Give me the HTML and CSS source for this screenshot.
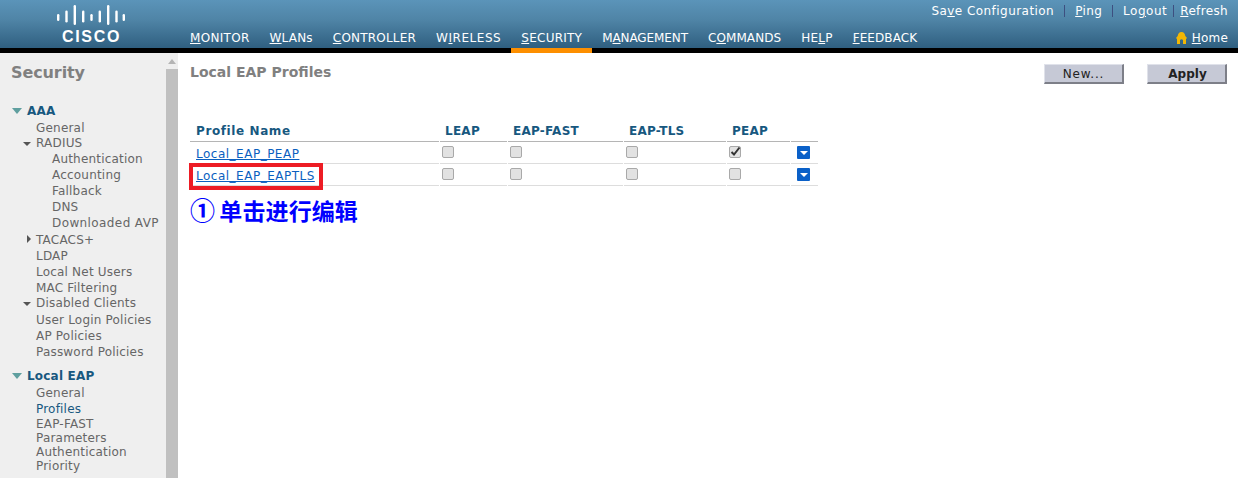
FILE: index.html
```html
<!DOCTYPE html>
<html>
<head>
<meta http-equiv="Content-Type" content="text/html; charset=utf-8"/>
<title>Local EAP Profiles</title>
<link rel="stylesheet" href="styles.css">
</head>
<body>

<div class="topbar">
  <div class="logo">
    <svg class="logo-bars" width="68" height="21" viewBox="0 0 68 21">
      <g fill="#fff">
        <rect x="0" y="9" width="2.4" height="7" rx="1.2"/>
        <rect x="8.300" y="5.500" width="2.4" height="12" rx="1.2"/>
        <rect x="16.600" y="0" width="2.4" height="20" rx="1.2"/>
        <rect x="25" y="5.500" width="2.4" height="12" rx="1.2"/>
        <rect x="33.300" y="9" width="2.4" height="7" rx="1.2"/>
        <rect x="41.600" y="5.500" width="2.4" height="12" rx="1.2"/>
        <rect x="50" y="0" width="2.4" height="20" rx="1.2"/>
        <rect x="58.300" y="5.500" width="2.4" height="12" rx="1.2"/>
        <rect x="65.600" y="9" width="2.4" height="7" rx="1.2"/>
      </g>
    </svg>
    <div class="logo-word">CISCO</div>
  </div>
  <div class="nav">
    <a><u>M</u>ONITOR</a>
    <a><u>W</u>LANs</a>
    <a><u>C</u>ONTROLLER</a>
    <a>W<u>I</u>RELESS</a>
    <a class="on"><u>S</u>ECURITY</a>
    <a>M<u>A</u>NAGEMENT</a>
    <a>C<u>O</u>MMANDS</a>
    <a>HE<u>L</u>P</a>
    <a><u>F</u>EEDBACK</a>
  </div>
  <div class="util">
    <div class="util-links">
      <a class="save">Sa<u>v</u>e Configuration</a><i></i>
      <a><u>P</u>ing</a><i></i>
      <a class="logout">Lo<u>g</u>out</a><i class="tight"></i>
      <a><u>R</u>efresh</a>
    </div>
    <div class="util-home">
      <svg width="11" height="12" viewBox="0 0 11 12"><path d="M5.5 0 C8 0 9 2 9.300 4 L11 6 L10 7 L10 12 L7 12 L7 8 Q5.500 6.500 4 8 L4 12 L1 12 L1 7 L0 6 L1.700 4 C2 2 3 0 5.500 0 Z" fill="#f2b705"/></svg>
      <a><u>H</u>ome</a>
    </div>
  </div>
</div>

<div class="page">
  <div class="side">
    <div class="side-menu">
      <h2>Security</h2>

      <div class="sec"><span class="tri-open"></span>AAA</div>
      <div class="row l1">General</div>
      <div class="row l1 short"><span class="sub-open"></span>RADIUS</div>
      <div class="row l2">Authentication</div>
      <div class="row l2">Accounting</div>
      <div class="row l2">Fallback</div>
      <div class="row l2">DNS</div>
      <div class="row l2 wide">Downloaded AVP</div>
      <div class="row l1 tall"><span class="sub-closed"></span>TACACS+</div>
      <div class="row l1">LDAP</div>
      <div class="row l1">Local Net Users</div>
      <div class="row l1">MAC Filtering</div>
      <div class="row l1 short"><span class="sub-open"></span>Disabled Clients</div>
      <div class="row l1 tall">User Login Policies</div>
      <div class="row l1">AP Policies</div>
      <div class="row l1">Password Policies</div>

      <div class="sec sec-2"><span class="tri-open"></span>Local EAP</div>
      <div class="row l1">General</div>
      <div class="row l1 cur">Profiles</div>
      <div class="row l1 wrap">EAP-FAST</div>
      <div class="row l1 wrap">Parameters</div>
      <div class="row l1 wrap">Authentication</div>
      <div class="row l1 wrap">Priority</div>
    </div>
    <div class="scroll">
      <div class="scroll-up"></div>
      <div class="scroll-thumb"></div>
    </div>
  </div>

  <div class="main">
    <div class="main-head">
      <h1>Local EAP Profiles</h1>
      <div class="btns">
        <button class="btn">New...</button>
        <button class="btn btn-b">Apply</button>
      </div>
    </div>

    <table class="grid">
      <colgroup>
        <col class="c1"><col class="c2"><col class="c3"><col class="c4"><col class="c5"><col class="c6">
      </colgroup>
      <tr>
        <th>Profile Name</th><th>LEAP</th><th>EAP-FAST</th><th>EAP-TLS</th><th>PEAP</th><th></th>
      </tr>
      <tr>
        <td><a href="#">Local_EAP_PEAP</a></td>
        <td><span class="chk"></span></td>
        <td><span class="chk"></span></td>
        <td><span class="chk"></span></td>
        <td><span class="chk"><svg width="11" height="11" viewBox="0 0 11 11"><path d="M1.500 6 L4 8.500 L9.500 1.500" fill="none" stroke="#333" stroke-width="2"/></svg></span></td>
        <td><span class="drop"></span></td>
      </tr>
      <tr>
        <td><a href="#">Local_EAP_EAPTLS</a><span class="mark"></span></td>
        <td><span class="chk"></span></td>
        <td><span class="chk"></span></td>
        <td><span class="chk"></span></td>
        <td><span class="chk"></span></td>
        <td><span class="drop"></span></td>
      </tr>
    </table>

    <div class="note"><span class="note-num">①</span> 单击进行编辑</div>
  </div>
</div>

</body>
</html>
```

FILE: styles.css
```css
html, body {
  margin: 0;
  padding: 0;
  height: 478px;
  overflow: hidden;
  background-color: white;
}

body, td, th, button {
  font-family: "DejaVu Sans", Verdana, sans-serif;
  font-size: 12px;
}

u {
  text-decoration: underline;
}

/* top bar */
.topbar {
  display: flex;
  height: 53px;
  background: linear-gradient(#5b94b9 0, #4f84a6 20px, #2f5f80 48px, #000 48px, #000 53px);
  color: white;
}

.logo {
  width: 180px;
  flex: none;
  display: flex;
  flex-direction: column;
  align-items: center;
  padding: 5px 0 0 1px;
  box-sizing: border-box;
}

.logo-bars {
  display: block;
}

.logo-word {
  margin-top: 2px;
  font-size: 16px;
  line-height: 17px;
  font-weight: bold;
  letter-spacing: 1.7px;
  padding-left: 2px;
  font-family: "Liberation Sans", sans-serif;
}

.nav {
  display: flex;
  align-items: flex-end;
}

.nav a {
  padding: 0 10px;
  height: 17px;
  line-height: 15px;
  border-bottom: 5px solid transparent;
  letter-spacing: 0.2px;
  white-space: nowrap;
}

.nav a:nth-child(1) { letter-spacing: 0.3px; }
.nav a:nth-child(4) { letter-spacing: 0.55px; }
.nav a:nth-child(5) { letter-spacing: 0.25px; }
.nav a:nth-child(6) { letter-spacing: -0.1px; }
.nav a:nth-child(7) { letter-spacing: 0.1px; }
.nav a:nth-child(9) { letter-spacing: 0.1px; }

.nav a.on {
  border-bottom-color: #fd8f00;
}

.util {
  margin-left: auto;
  padding: 2px 10px 0 0;
  display: flex;
  flex-direction: column;
  align-items: flex-end;
  letter-spacing: 0.2px;
  white-space: nowrap;
}

.util-links {
  display: flex;
  align-items: center;
  height: 17px;
}

.util-links a {
  letter-spacing: 0.35px;
}

.util-links .save {
  letter-spacing: 0.45px;
}

.util-links .logout {
  letter-spacing: 0.5px;
}

.util-links i {
  width: 1px;
  height: 12px;
  margin: 0 10px;
  background-color: #3d4f80;
}

.util-links i.tight {
  margin: 0 6px;
}

.util-home {
  margin-top: 11px;
  display: flex;
  align-items: center;
  gap: 5px;
  height: 16px;
}

/* layout */
.page {
  display: flex;
  height: 425px;
}

.side {
  width: 178px;
  flex: none;
  display: flex;
  background-color: #efefef;
  overflow: hidden;
}

.side-menu {
  width: 166px;
  flex: none;
  white-space: nowrap;
  color: #666;
}

.side-menu h2 {
  margin: 0;
  padding: 11px 0 0 11px;
  height: 38px;
  font-size: 16px;
  line-height: 18px;
  font-weight: bold;
  letter-spacing: -0.1px;
  color: #808080;
}

.scroll {
  width: 12px;
  flex: none;
}

.scroll-up {
  width: 0;
  margin: 6px 0 0 2px;
  border-left: 4px solid transparent;
  border-right: 4px solid transparent;
  border-bottom: 5px solid #b5b5b5;
}

.scroll-thumb {
  margin-top: 5px;
  height: 420px;
  background-color: #c0c0c0;
}

.sec {
  height: 18px;
  line-height: 18px;
  padding-left: 27px;
  font-weight: bold;
  color: #17587f;
  position: relative;
  letter-spacing: 0.2px;
}

.sec-2 {
  margin-top: 7px;
}

.tri-open {
  position: absolute;
  left: 12px;
  top: 6px;
  border-left: 5px solid transparent;
  border-right: 5px solid transparent;
  border-top: 6px solid #5f9f9f;
}

.row {
  height: 16px;
  line-height: 16px;
  position: relative;
  letter-spacing: 0.2px;
}

.row.l1 { padding-left: 36px; }
.row.l2 { padding-left: 52px; }
.row.wide { letter-spacing: 0.4px; }
.row.short { height: 15px; line-height: 15px; }
.row.tall { padding-top: 1px; }
.row.wrap { height: 14px; line-height: 14px; }
.row.cur { color: #17587f; }

.sub-open {
  position: absolute;
  left: 23px;
  top: 6px;
  border-left: 4px solid transparent;
  border-right: 4px solid transparent;
  border-top: 4px solid #555;
}

.sub-closed {
  position: absolute;
  left: 27px;
  top: 4px;
  border-top: 4px solid transparent;
  border-bottom: 4px solid transparent;
  border-left: 4px solid #555;
}

/* content */
.main {
  flex: 1;
  padding: 0 11px 0 12px;
}

.main-head {
  display: flex;
  justify-content: space-between;
  height: 55px;
  padding-top: 11px;
}

.main-head h1 {
  margin: 0;
  font-size: 14px;
  line-height: 17px;
  color: #808080;
}

.btns {
  display: flex;
  gap: 23px;
}

.btn {
  box-sizing: border-box;
  width: 80px;
  height: 20px;
  padding: 1px 0 0 0;
  background-color: #c6c9d6;
  border: 1px solid;
  border-color: #e0e2ea #7d7f88 #7d7f88 #e0e2ea;
  border-width: 1px 2px 2px 1px;
  color: #222;
  font-size: 12px;
  letter-spacing: 0.8px;
  font-weight: bold;
}

.btn:first-child {
  font-weight: normal;
}

.btn-b {
  letter-spacing: 0;
  padding-left: 2px;
}

.grid {
  border-collapse: separate;
  border-spacing: 1px 0;
  table-layout: fixed;
  width: 629px;
  margin-left: -1px;
}

.c1 { width: 249px; }
.c2 { width: 67px; }
.c3 { width: 115px; }
.c4 { width: 102px; }
.c5 { width: 63px; }
.c6 { width: 27px; }

.grid th {
  height: 20px;
  padding: 2px 0 0 5px;
  text-align: left;
  color: #17587f;
  letter-spacing: 0.25px;
  border-bottom: 1px solid #b5b5b5;
}

.grid th:first-child {
  padding-left: 6px;
  letter-spacing: 0.6px;
}

.grid td {
  height: 19px;
  padding: 2px 0 0 2px;
  border-bottom: 1px solid #ddd;
  position: relative;
}

.grid td:first-child {
  padding-left: 6px;
}

.grid td:last-child {
  padding-left: 6px;
}

.grid a {
  color: #0a60c0;
  letter-spacing: 0.5px;
}

.chk {
  box-sizing: border-box;
  display: block;
  width: 12px;
  height: 12px;
  margin-top: -3px;
  background-color: #e2e2e2;
  border: 1px solid #a9a9a9;
  border-radius: 2px;
}

.chk svg {
  display: block;
  margin: -1px 0 0 0;
}

.drop {
  display: block;
  width: 13px;
  height: 13px;
  margin-top: -3px;
  background-color: #0a60c8;
  border-radius: 1px;
  position: relative;
}

.drop::after {
  content: "";
  position: absolute;
  left: 3px;
  top: 5px;
  border-left: 4px solid transparent;
  border-right: 4px solid transparent;
  border-top: 4px solid white;
}

/* annotation over the table */
.mark {
  position: absolute;
  left: -1px;
  top: -1px;
  width: 134px;
  height: 27px;
  box-sizing: border-box;
  border: 4px solid #ed1c24;
}

.note {
  margin-top: 8px;
  font-family: "Noto Sans CJK SC", sans-serif;
  font-size: 23px;
  line-height: 30px;
  font-weight: bold;
  letter-spacing: 0.1px;
  color: #0000ff;
}

.note-num {
  font-size: 25px;
  letter-spacing: -1px;
}
```
